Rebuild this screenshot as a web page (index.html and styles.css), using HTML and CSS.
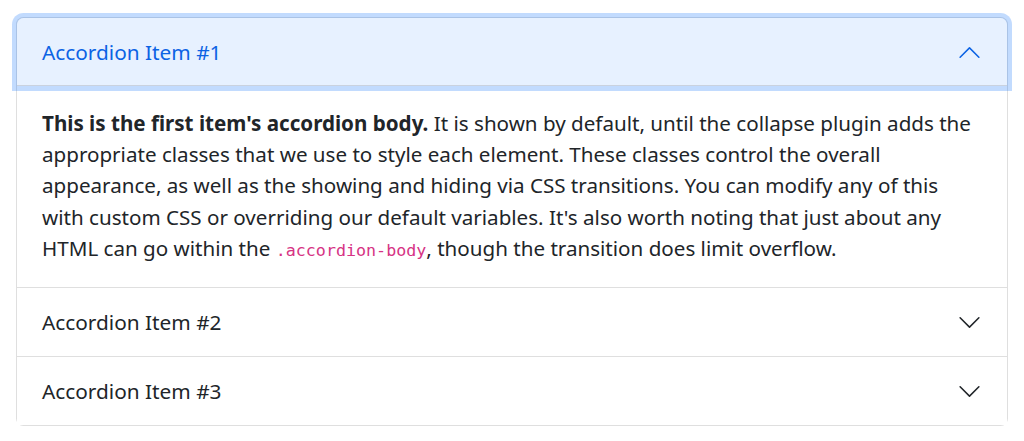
FILE: index.html
```html
<!DOCTYPE html>
<html lang="en">
<head>
<meta charset="utf-8">
<title>Accordion</title>
<link rel="stylesheet" href="styles.css">
</head>
<body>
<div class="container">
  <div class="accordion">
    <div class="acc-item first">
      <h2 class="acc-header">
        <button class="acc-button active" type="button">
          <span class="acc-title">Accordion Item #1</span>
          <svg class="chev" viewBox="0 0 16 16" width="25" height="25"><path fill="currentColor" fill-rule="evenodd" d="M1.646 4.646a.5.5 0 0 1 .708 0L8 10.293l5.646-5.647a.5.5 0 0 1 .708.708l-6 6a.5.5 0 0 1-.708 0l-6-6a.5.5 0 0 1 0-.708z"/></svg>
        </button>
      </h2>
      <div class="acc-body">
        <strong>This is the first item's accordion body.</strong> It is shown by default, until the collapse plugin adds the<br>
        appropriate classes that we use to style each element. These classes control the overall<br>
        appearance, as well as the showing and hiding via CSS transitions. You can modify any of this<br>
        with custom CSS or overriding our default variables. It's also worth noting that just about any<br>
        HTML can go within the <code>.accordion-body</code>, though the transition does limit overflow.
      </div>
    </div>
    <div class="acc-item">
      <h2 class="acc-header">
        <button class="acc-button" type="button">
          <span class="acc-title">Accordion Item #2</span>
          <svg class="chev" viewBox="0 0 16 16" width="25" height="25"><path fill="currentColor" fill-rule="evenodd" d="M1.646 4.646a.5.5 0 0 1 .708 0L8 10.293l5.646-5.647a.5.5 0 0 1 .708.708l-6 6a.5.5 0 0 1-.708 0l-6-6a.5.5 0 0 1 0-.708z"/></svg>
        </button>
      </h2>
    </div>
    <div class="acc-item last">
      <h2 class="acc-header">
        <button class="acc-button" type="button">
          <span class="acc-title">Accordion Item #3</span>
          <svg class="chev" viewBox="0 0 16 16" width="25" height="25"><path fill="currentColor" fill-rule="evenodd" d="M1.646 4.646a.5.5 0 0 1 .708 0L8 10.293l5.646-5.647a.5.5 0 0 1 .708.708l-6 6a.5.5 0 0 1-.708 0l-6-6a.5.5 0 0 1 0-.708z"/></svg>
        </button>
      </h2>
    </div>
  </div>
</div>
</body>
</html>
```

FILE: styles.css
```css
* { box-sizing: border-box; }
html, body {
  margin: 0;
  background: #fff;
}
body {
  font-family: "Noto Sans", "Open Sans", sans-serif;
  font-size: 20.6px;
  line-height: 1.5;
  color: #212529;
}
.container {
  padding: 17px 16px 16px;
}
.accordion {
  width: 100%;
}
.acc-item {
  border: 1px solid rgba(0, 0, 0, 0.125);
  background: #fff;
}
.acc-item + .acc-item {
  border-top: 0;
}
.acc-item.first {
  border-top-left-radius: 7.5px;
  border-top-right-radius: 7.5px;
}
.acc-item.last {
  border-bottom-left-radius: 7.5px;
  border-bottom-right-radius: 7.5px;
}
.acc-header {
  margin: 0;
  font-size: inherit;
  font-weight: 400;
}
.acc-button {
  position: relative;
  display: flex;
  align-items: center;
  width: 100%;
  padding: 19px 25px;
  font: inherit;
  font-size: 20.8px;
  line-height: 30px;
  color: #212529;
  text-align: left;
  background: #fff;
  border: 0;
  border-radius: 0;
}
.acc-title {
  flex: 1;
}
.chev {
  flex-shrink: 0;
  display: block;
  color: #212529;
}
.acc-button.active {
  color: #0c63e4;
  background: #e7f1ff;
  border-top-left-radius: 6.5px;
  border-top-right-radius: 6.5px;
  box-shadow: inset 0 -1px 0 rgba(0, 0, 0, 0.125), 0 0 0 5px rgba(13, 110, 253, 0.25);
  z-index: 3;
}
.acc-button.active .chev {
  color: #0c63e4;
  transform: rotate(180deg);
}
.acc-body {
  padding: 22px 25px 21px;
  line-height: 31.2px;
  white-space: nowrap;
}
.acc-body strong {
  font-weight: 700;
}
code {
  font-family: "DejaVu Sans Mono", "Liberation Mono", monospace;
  font-size: 0.81em;
  color: #d63384;
}
```
